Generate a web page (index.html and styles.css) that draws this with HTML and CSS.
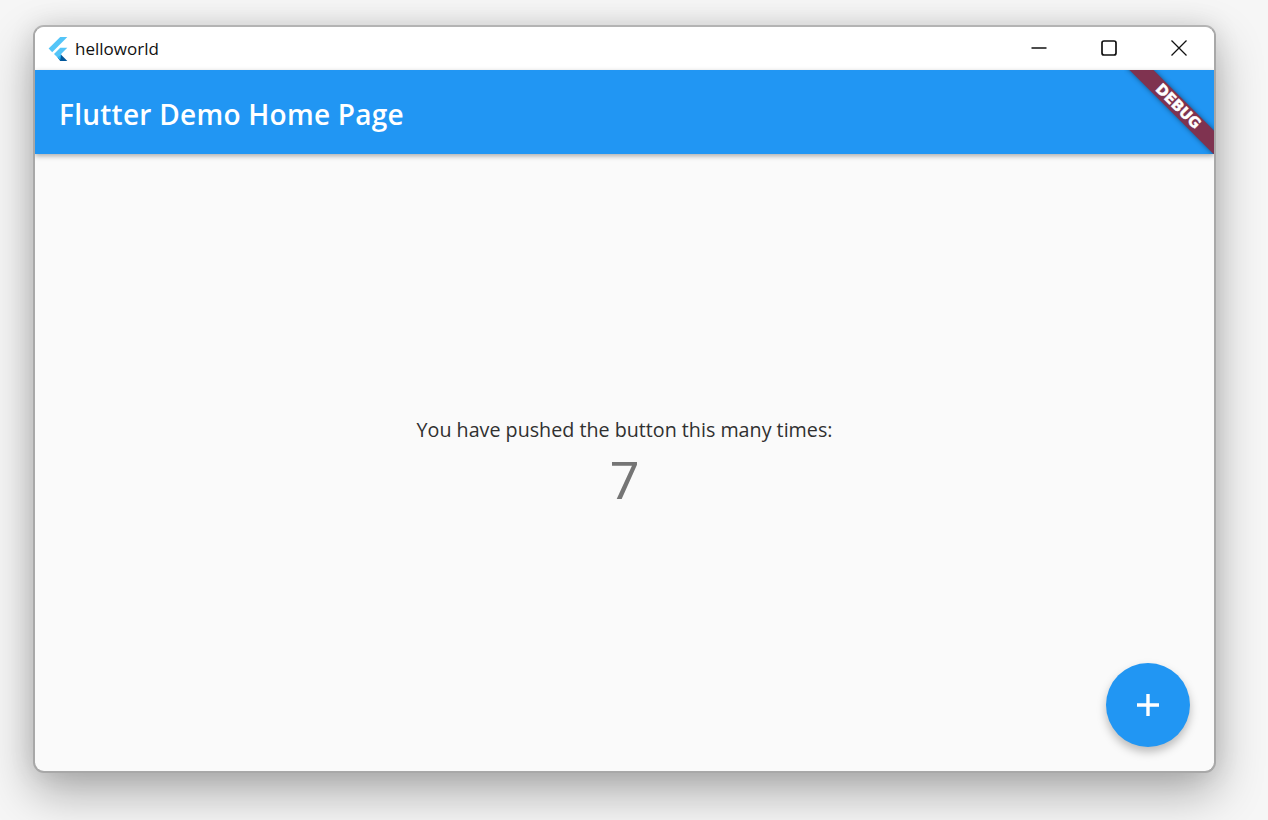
FILE: index.html
```html
<!DOCTYPE html>
<html lang="en">
<head>
<meta charset="utf-8">
<title>helloworld</title>
<link rel="stylesheet" href="styles.css">
</head>
<body>
<div class="window">
  <header class="titlebar">
    <svg class="logo" viewBox="9 10 148 188" aria-hidden="true">
      <polygon fill="#54C5F8" points="37.7,128.9 9.8,101 100.4,10.4 156.1,10.4"/>
      <polygon fill="#54C5F8" points="156.1,93.4 100.4,93.4 51.5,142.3 79.3,170.1"/>
      <polygon fill="#01579B" points="100.4,197.8 156.1,197.8 107.8,149.4 79.3,170.1"/>
      <polygon fill="#29B6F6" points="79.3,170.1 107.8,141.7 107.8,149.4 100.4,191"/>
    </svg>
    <span class="app-name">helloworld</span>
    <div class="controls">
      <button class="control" aria-label="Minimize"><svg viewBox="0 0 16 16"><path d="M0.5 8H15.5"/></svg></button>
      <button class="control" aria-label="Maximize"><svg class="icon-max" viewBox="0 0 16 16"><rect x="1" y="1" width="14" height="14" rx="2"/></svg></button>
      <button class="control" aria-label="Close"><svg viewBox="0 0 16 16"><path d="M0.5 0.5L15.5 15.5M15.5 0.5L0.5 15.5"/></svg></button>
    </div>
  </header>
  <div class="appbar">
    <h1 class="appbar-title">Flutter Demo Home Page</h1>
    <div class="debug-clip"><div class="debug-ribbon">DEBUG</div></div>
  </div>
  <main class="content">
    <p class="label">You have pushed the button this many times:</p>
    <p class="count">7</p>
    <button class="fab" aria-label="Increment"><svg viewBox="0 0 24 24"><path d="M1 12H23M12 1V23"/></svg></button>
  </main>
</div>
</body>
</html>
```
FILE: styles.css
```css
* { box-sizing: border-box; }
html, body { height: 100%; }
body {
  margin: 0;
  padding: 25px 52px 0 33px;
  background: #f6f6f6;
  overflow: hidden;
  font-family: "Open Sans", "Noto Sans", sans-serif;
}
.window {
  width: 1183px;
  height: 748px;
  display: flex;
  flex-direction: column;
  background: #fafafa;
  border: 2px solid #a8a8a8;
  border-top-color: #b4b4b4;
  border-radius: 11px;
  box-shadow: 0 20px 48px rgba(0,0,0,.3), 0 0 26px rgba(0,0,0,.1);
  overflow: hidden;
}
.titlebar {
  height: 43px;
  flex: none;
  display: flex;
  align-items: center;
  padding-left: 13px;
  background: #fff;
}
.logo { width: 20px; height: 24px; }
.app-name {
  margin-left: 7px;
  font-size: 17px;
  color: #111;
}
.controls { margin-left: auto; display: flex; }
.control {
  width: 70px;
  height: 42px;
  padding: 0;
  border: 0;
  background: none;
  display: flex;
  align-items: center;
  justify-content: center;
}
.control svg { width: 16px; height: 16px; fill: none; stroke: #111; stroke-width: 1.3; margin-top: -2px; }
.control .icon-max { stroke-width: 1.7; margin-right: 1px; }
.appbar {
  position: relative;
  height: 84px;
  flex: none;
  display: flex;
  align-items: center;
  padding: 3px 0 0 24px;
  background: #2196f3;
  box-shadow: 0 2px 5px rgba(0,0,0,.32);
  z-index: 1;
}
.appbar-title {
  margin: 0;
  font-size: 28px;
  font-weight: 600;
  color: #fff;
  letter-spacing: .26px;
}
.debug-clip {
  position: absolute;
  top: 0;
  right: 0;
  width: 90px;
  height: 84px;
  overflow: hidden;
}
.debug-ribbon {
  position: absolute;
  top: 28px;
  right: -29px;
  width: 130px;
  height: 17px;
  transform: rotate(45deg);
  background: #7f3350;
  box-shadow: 0 0 5px rgba(0,0,0,.45);
  color: #fff;
  font-family: "DejaVu Sans", sans-serif;
  font-size: 14.5px;
  font-weight: 700;
  -webkit-text-stroke: .5px #fff;
  line-height: 17px;
  text-align: center;
}
.content {
  position: relative;
  flex: 1;
  display: flex;
  flex-direction: column;
  align-items: center;
  justify-content: center;
}
.label {
  margin: 0;
  font-size: 19.7px;
  line-height: 27px;
  color: #303030;
}
.count {
  margin: 10px 0 0;
  font-family: "Roboto", sans-serif;
  font-weight: 400;
  font-size: 52px;
  line-height: 57px;
  color: #757575;
}
.fab {
  position: absolute;
  right: 24px;
  bottom: 24px;
  width: 84px;
  height: 84px;
  padding: 0;
  border: 0;
  border-radius: 50%;
  background: #2196f3;
  box-shadow: 0 5px 10px rgba(0,0,0,.26);
  display: flex;
  align-items: center;
  justify-content: center;
}
.fab svg { width: 24px; height: 24px; fill: none; stroke: #fff; stroke-width: 3.4; }
```
